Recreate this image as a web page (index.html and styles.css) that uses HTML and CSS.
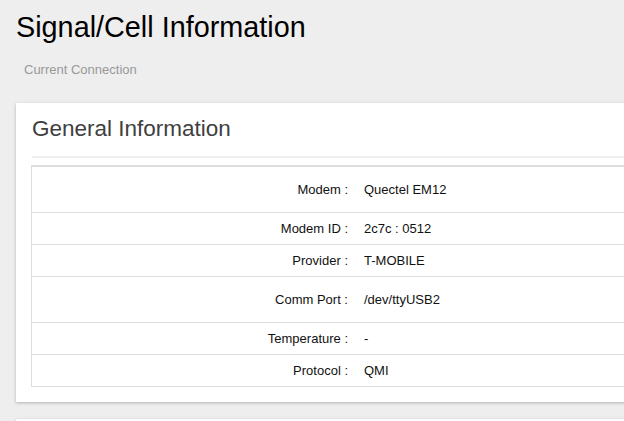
FILE: index.html
```html
<!DOCTYPE html>
<html>
<head>
<meta charset="utf-8">
<link rel="stylesheet" href="styles.css">
</head>
<body>
<div class="page">
  <h1 class="title">Signal/Cell Information</h1>
  <div class="subtitle">Current Connection</div>
  <div class="card">
    <h2 class="card-title">General Information</h2>
    <div class="rule"></div>
    <div class="table">
      <div class="row tall"><div class="label">Modem :</div><div class="value">Quectel EM12</div></div>
      <div class="row"><div class="label">Modem ID :</div><div class="value">2c7c : 0512</div></div>
      <div class="row"><div class="label">Provider :</div><div class="value">T-MOBILE</div></div>
      <div class="row tall"><div class="label">Comm Port :</div><div class="value">/dev/ttyUSB2</div></div>
      <div class="row"><div class="label">Temperature :</div><div class="value">-</div></div>
      <div class="row last"><div class="label">Protocol :</div><div class="value">QMI</div></div>
    </div>
  </div>
  <div class="card next"></div>
</div>
</body>
</html>
```
FILE: styles.css
```css
html, body {
  margin: 0;
  padding: 0;
  background: #eeeeee;
  overflow: hidden;
  font-family: "Liberation Sans", Arial, sans-serif;
}
.page {
  padding: 11px 0 0 16px;
  width: 720px;
}
.title {
  margin: 0;
  font-size: 28.8px;
  font-weight: normal;
  line-height: 32px;
  color: #000;
}
.subtitle {
  margin: 19px 0 0 8px;
  font-size: 13px;
  line-height: 15px;
  color: #999;
}
.card {
  margin-top: 26px;
  background: #fff;
  box-shadow: 0 1px 3px rgba(0, 0, 0, 0.25);
  padding: 11px 0 15px 16px;
}
.card-title {
  margin: 0;
  font-size: 22.5px;
  font-weight: normal;
  line-height: 30px;
  color: #404040;
}
.rule {
  margin-top: 12px;
  height: 2px;
  background: #eeeeee;
}
.table {
  margin-top: 7px;
  margin-left: -1px;
  border-top: 2px solid #dddddd;
  border-left: 1px solid #dddddd;
}
.row {
  display: grid;
  grid-template-columns: 326px 1fr;
  align-items: center;
  height: 31px;
  border-bottom: 1px solid #dddddd;
  font-size: 13px;
  color: #111;
}
.row.tall {
  height: 45px;
}
.label {
  text-align: right;
  padding-right: 10px;
}
.value {
  padding-left: 6px;
}
.card.next {
  margin-top: 17px;
  height: 40px;
  padding: 0;
}
```
